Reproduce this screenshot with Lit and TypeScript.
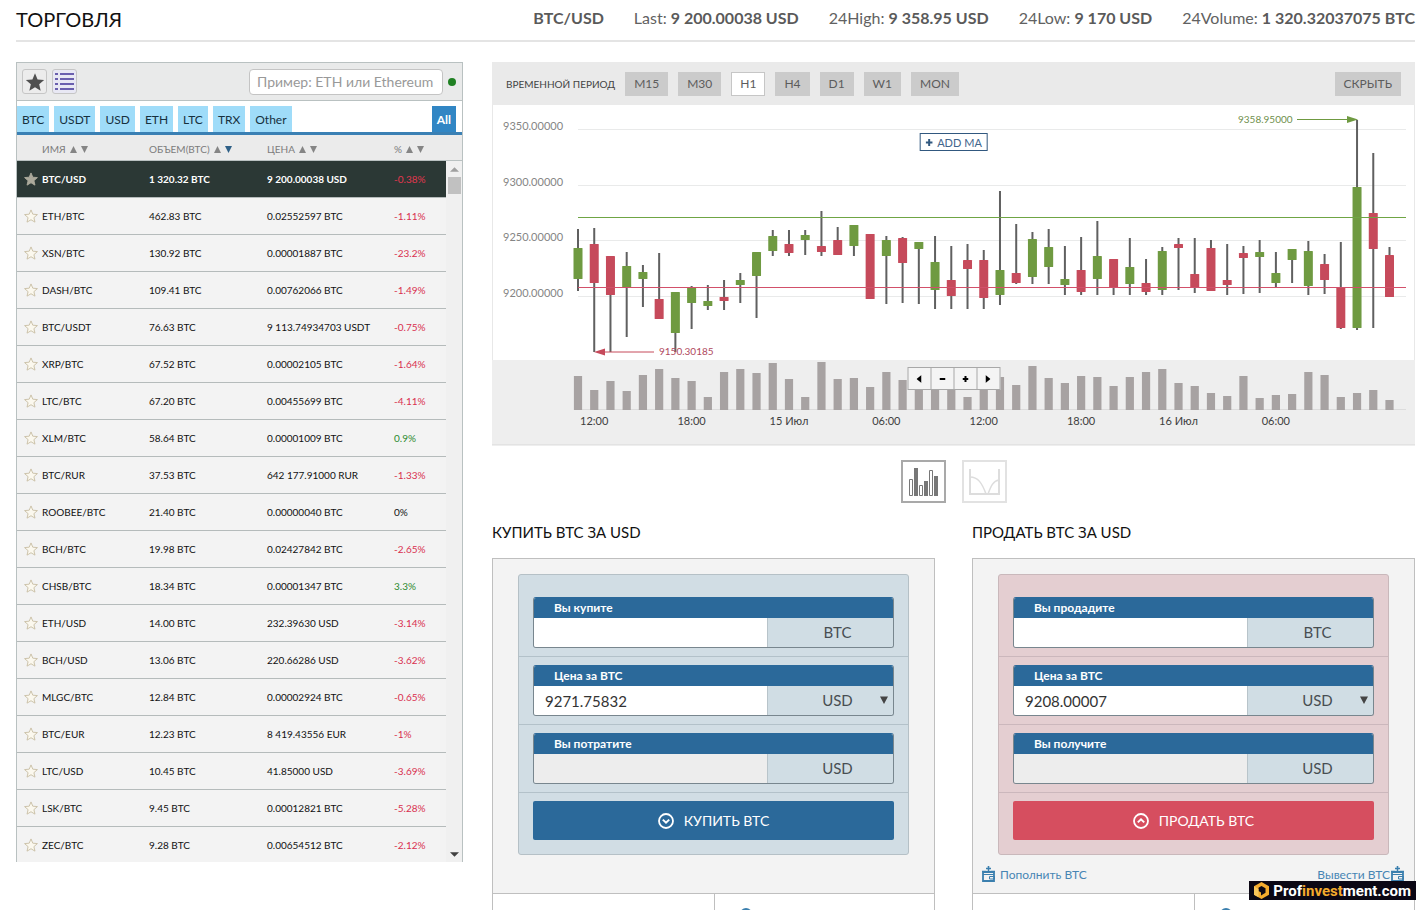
import { LitElement, html, svg, css, nothing } from "lit";
import { customElement, property, state } from "lit/decorators.js";
import { classMap } from "lit/directives/class-map.js";

/** Market rows: pair, volume, price, daily change. */
const MARKETS: [string, string, string, string][] = [
  ["BTC/USD", "1 320.32 BTC", "9 200.00038 USD", "-0.38%"],
  ["ETH/BTC", "462.83 BTC", "0.02552597 BTC", "-1.11%"],
  ["XSN/BTC", "130.92 BTC", "0.00001887 BTC", "-23.2%"],
  ["DASH/BTC", "109.41 BTC", "0.00762066 BTC", "-1.49%"],
  ["BTC/USDT", "76.63 BTC", "9 113.74934703 USDT", "-0.75%"],
  ["XRP/BTC", "67.52 BTC", "0.00002105 BTC", "-1.64%"],
  ["LTC/BTC", "67.20 BTC", "0.00455699 BTC", "-4.11%"],
  ["XLM/BTC", "58.64 BTC", "0.00001009 BTC", "0.9%"],
  ["BTC/RUR", "37.53 BTC", "642 177.91000 RUR", "-1.33%"],
  ["ROOBEE/BTC", "21.40 BTC", "0.00000040 BTC", "0%"],
  ["BCH/BTC", "19.98 BTC", "0.02427842 BTC", "-2.65%"],
  ["CHSB/BTC", "18.34 BTC", "0.00001347 BTC", "3.3%"],
  ["ETH/USD", "14.00 BTC", "232.39630 USD", "-3.14%"],
  ["BCH/USD", "13.06 BTC", "220.66286 USD", "-3.62%"],
  ["MLGC/BTC", "12.84 BTC", "0.00002924 BTC", "-0.65%"],
  ["BTC/EUR", "12.23 BTC", "8 419.43556 EUR", "-1%"],
  ["LTC/USD", "10.45 BTC", "41.85000 USD", "-3.69%"],
  ["LSK/BTC", "9.45 BTC", "0.00012821 BTC", "-5.28%"],
  ["ZEC/BTC", "9.28 BTC", "0.00654512 BTC", "-2.12%"],
];

/** Candles: wick top, wick bottom, body top, body bottom, rising (1) or falling (0), volume top. */
const CANDLES: number[][] = [
  [229, 291, 248, 279, 1, 376], [228, 352, 244, 283, 0, 390], [256, 352, 256, 295, 0, 381],
  [252, 337, 266, 288, 1, 391], [265, 307, 272, 279, 1, 375], [253, 319, 299, 319, 0, 369],
  [292, 352, 292, 333, 1, 378], [286, 329, 287, 303, 1, 381], [285, 310, 301, 306, 1, 397],
  [280, 310, 297, 301, 0, 372], [273, 303, 280, 285, 1, 369], [252, 318, 252, 276, 1, 373],
  [230, 256, 236, 251, 1, 363], [230, 256, 244, 253, 0, 379], [230, 255, 235, 240, 1, 397],
  [211, 256, 246, 252, 0, 362], [227, 255, 240, 255, 0, 379], [225, 256, 225, 246, 1, 378],
  [234, 299, 234, 299, 0, 387], [236, 304, 240, 256, 1, 372], [237, 303, 238, 263, 0, 380],
  [242, 304, 242, 249, 1, 387], [236, 309, 262, 290, 1, 378], [246, 309, 280, 296, 0, 385],
  [244, 309, 260, 269, 0, 397], [250, 309, 260, 298, 0, 380], [191, 305, 270, 295, 1, 377],
  [224, 284, 273, 283, 0, 385], [232, 284, 239, 277, 1, 366], [229, 284, 247, 267, 1, 378],
  [246, 295, 279, 285, 1, 383], [237, 295, 270, 292, 0, 376], [221, 295, 256, 279, 1, 377],
  [259, 295, 259, 288, 0, 386], [238, 295, 267, 284, 1, 377], [259, 295, 283, 292, 0, 372],
  [247, 295, 251, 290, 1, 369], [238, 290, 244, 248, 0, 383], [238, 293, 274, 288, 0, 386],
  [240, 291, 248, 291, 0, 393], [244, 295, 280, 285, 0, 396], [246, 294, 253, 258, 0, 376],
  [240, 293, 252, 257, 1, 398], [252, 288, 273, 283, 1, 395], [249, 283, 249, 260, 1, 394],
  [241, 295, 251, 286, 1, 372], [254, 294, 264, 280, 0, 375], [242, 329, 287, 328, 0, 397],
  [120, 330, 187, 328, 1, 393], [153, 328, 213, 249, 0, 390], [247, 297, 255, 297, 0, 400],
];

const GRID: [number, string][] = [
  [130, "9350.00000"], [186, "9300.00000"], [241, "9250.00000"], [297, "9200.00000"],
];
const TIMES = ["12:00", "18:00", "15 Июл", "06:00", "12:00", "18:00", "16 Июл", "06:00"];
const STAR = "M12 1.6l3.1 7.3 7.9.7-6 5.2 1.8 7.7L12 18.4l-6.8 4.1L7 14.8 1 9.6l7.900-.7z";
const candleX = (i: number) => 578 + i * 16.23;

@customElement("market-list")
export class MarketList extends LitElement {
  @state() private selected = "BTC/USD";

  static styles = css`
    :host { display: block; border: 1px solid #b9c1c1; border-bottom: 0; background: #ebebeb; }
    button, input { font: inherit; }
    .tools { display: flex; align-items: center; gap: 5px; height: 37px; padding: 0 6px 0 5px; background: #e9eaea; border-bottom: 1px solid #b9c1c1; }
    .tool { display: grid; place-items: center; width: 25px; height: 25px; padding: 0; border: 1px solid #c6c6c6; border-radius: 3px; background: #ececec; }
    .tool.list { background: #e8e8f4; }
    .search { box-sizing: border-box; width: 194px; height: 26px; margin-left: auto; padding: 0 7px; border: 1px solid #c4c4c4; border-radius: 4px; background: #fff; font-size: 14px; }
    .search::placeholder { color: #999; opacity: 1; }
    .dot { width: 8px; height: 8px; border-radius: 50%; background: #1f8023; }
    .tabs { display: flex; gap: 5px; padding: 5px 6px 0 0; background: #fff; border-bottom: 3px solid #3a80b4; }
    .tab { height: 26px; padding: 0 5px; border: 0; background: #9fdcf9; color: #16303e; font-size: 12px; }
    .tab.all { margin-left: auto; background: #3186c4; color: #fff; font-weight: 700; }
    .body { display: grid; grid-template-columns: 1fr 16px; height: 727px; overflow: hidden; }
    table { width: 100%; align-self: start; border-collapse: separate; border-spacing: 0; table-layout: fixed; font-size: 10px; color: #111; }
    .c-star { width: 25px; }
    .c-name { width: 107px; }
    .c-vol { width: 118px; }
    .c-price { width: 127px; }
    th { box-sizing: border-box; height: 26px; padding: 2px 0 0; border-bottom: 1px solid #b9c1c1; font-size: 10px; font-weight: 400; color: #7c7c7c; text-align: left; white-space: nowrap; }
    .sort { width: 7px; height: 7px; margin-left: 4px; fill: #858585; }
    .sort.on { fill: #2f6087; }
    td { box-sizing: border-box; height: 37px; padding: 0 0 1px; border-bottom: 1px solid #b5bbbb; background: #f3f3f3; white-space: nowrap; }
    .fav { display: block; width: 14px; height: 14px; margin-left: 7px; fill: #fbf8ee; stroke: #c9bfa6; stroke-width: 1.6; }
    .down { color: #d9304f; }
    .up { color: #2b8a2e; }
    .sel td { background: #2b3835; color: #fff; font-weight: 700; }
    .sel td.down { color: #e2374f; font-weight: 400; }
    .sel .fav { fill: #aba99b; stroke: #aba99b; }
    .side { display: grid; grid-template-rows: 26px 1fr; }
    .cap { box-sizing: border-box; border-bottom: 1px solid #b9c1c1; }
    .bar { display: flex; flex-direction: column; align-items: center; background: #f0f0f0; }
    .arrow { width: 9px; height: 5px; margin: 6px 0 5px; fill: #a0a0a0; }
    .thumb { width: 13px; height: 17px; background: #c1c1c1; }
    .arrow.low { margin: auto 0 7px; fill: #404040; }
  `;

  private sorter(down = false) {
    return html`<svg class="sort" viewBox="0 0 8 8" preserveAspectRatio="none"><path d="M0 8h8L4 0z" /></svg><svg
        class=${classMap({ sort: true, on: down })} viewBox="0 0 8 8" preserveAspectRatio="none"><path d="M0 0h8L4 8z" /></svg>`;
  }

  render() {
    return html`
      <div class="tools">
        <button class="tool" aria-label="Избранное">
          <svg width="20" height="20" viewBox="0 0 24 24" fill="#505050"><path d=${STAR} /></svg>
        </button>
        <button class="tool list" aria-label="Список">
          <svg width="19" height="17" viewBox="0 0 19 17" fill="#6a5fae">
            ${[0, 5, 10, 15].map((y) => svg`<rect x="0" y=${y} width="3" height="2" /><rect x="5" y=${y} width="14" height="2" />`)}
          </svg>
        </button>
        <input class="search" aria-label="Поиск" placeholder="Пример: ETH или Ethereum" />
        <span class="dot"></span>
      </div>
      <div class="tabs">
        ${["BTC", "USDT", "USD", "ETH", "LTC", "TRX", "Other"].map((t) => html`<button class="tab">${t}</button>`)}
        <button class="tab all">All</button>
      </div>
      <div class="body">
        <table>
          <colgroup><col class="c-star" /><col class="c-name" /><col class="c-vol" /><col class="c-price" /><col /></colgroup>
          <thead>
            <tr><th></th><th>ИМЯ${this.sorter()}</th><th>ОБЪЕМ(BTC)${this.sorter(true)}</th><th>ЦЕНА${this.sorter()}</th><th>%${this.sorter()}</th></tr>
          </thead>
          <tbody>
            ${MARKETS.map(([pair, vol, price, pct]) => html`
              <tr class=${classMap({ sel: pair === this.selected })} @click=${() => (this.selected = pair)}>
                <td><svg class="fav" viewBox="0 0 24 24"><path d=${STAR} /></svg></td>
                <td>${pair}</td><td>${vol}</td><td>${price}</td>
                <td class=${classMap({ down: pct.startsWith("-"), up: !pct.startsWith("-") && pct !== "0%" })}>${pct}</td>
              </tr>`)}
          </tbody>
        </table>
        <div class="side">
          <div class="cap"></div>
          <div class="bar">
            <svg class="arrow" viewBox="0 0 10 5"><path d="M0 5h10L5 0z" /></svg>
            <div class="thumb"></div>
            <svg class="arrow low" viewBox="0 0 10 5"><path d="M0 0h10L5 5z" /></svg>
          </div>
        </div>
      </div>`;
  }
}

@customElement("price-chart")
export class PriceChart extends LitElement {
  @state() private period = "H1";

  static styles = css`
    :host { display: block; position: relative; }
    button { font: inherit; }
    .head { display: flex; align-items: center; gap: 10px; height: 43px; padding: 0 14px; background: #eaeaea; color: #444; }
    .label { font-size: 10px; white-space: nowrap; }
    .per { height: 24px; padding: 0 8px; border: 1px solid #cbcbcb; background: #cbcbcb; color: #5c5c5c; font-size: 12px; white-space: nowrap; }
    .per.on { background: #fff; border-color: #c6c6c6; }
    .hide { margin-left: auto; }
    .plot { display: block; width: 100%; height: auto; }
    .tick { font-size: 11px; fill: #858585; }
    .time { font-size: 11px; fill: #404040; text-anchor: middle; }
    .note { font-size: 10px; }
    .add { position: absolute; top: 71px; left: 50%; transform: translateX(-50%); display: flex; align-items: center; gap: 5px; height: 18px; padding: 0 5px; border: 1px solid #31587f; background: #fff; color: #41658c; font-size: 11px; white-space: nowrap; }
    .nav { position: absolute; top: 305px; left: 50%; transform: translateX(-50%); display: flex; border: 1px solid #a8a8a8; background: #f4f4f4; }
    .nav button { display: grid; place-items: center; width: 23px; height: 21px; padding: 0; border: 0; border-left: 1px solid #a8a8a8; background: none; }
    .nav button:first-child { width: 22px; border-left: 0; }
  `;

  render() {
    return html`
      <div class="head">
        <span class="label">ВРЕМЕННОЙ ПЕРИОД</span>
        ${["M15", "M30", "H1", "H4", "D1", "W1", "MON"].map((p) => html`
          <button class=${classMap({ per: true, on: p === this.period })} @click=${() => (this.period = p)}>${p}</button>`)}
        <button class="per hide">СКРЫТЬ</button>
      </div>
      <svg class="plot" viewBox="492 105 923 341">
        <rect x="492" y="105" width="923" height="255" fill="#e8e8e8" />
        <rect x="493" y="105" width="921" height="255" fill="#fff" />
        <rect x="492" y="360" width="923" height="86" fill="#eeeeee" />
        <rect x="492" y="444" width="923" height="1" fill="#e3e3e3" />
        ${GRID.map(([y, t]) => svg`<rect x="578" y=${y - 1} width="828" height="1" fill="#e9eaea" /><text class="tick" x="503" y=${y}>${t}</text>`)}
        <rect x="578" y="409" width="828" height="1" fill="#dcdcdc" />
        ${CANDLES.map(([top, bottom], i) => svg`<rect x=${candleX(i) - 1} y=${top} width="2" height=${bottom - top} fill="#606060" />`)}
        ${CANDLES.map(([, , open, close, up], i) => svg`<rect x=${candleX(i) - 4.5} y=${open} width="9" height=${close - open} rx="0.6" fill=${up ? "#6f9a41" : "#c64a5b"} />`)}
        ${CANDLES.map((c, i) => svg`<rect x=${candleX(i) - 4.1} y=${c[5]} width="8.200" height=${410 - c[5]} fill="#a7a2a2" />`)}
        <path d="M578 217.500h828" stroke="#6fa544" />
        <path d="M578 287.500h828" stroke="#d2506a" />
        ${TIMES.map((t, i) => svg`<text class="time" x=${candleX(1 + i * 6)} y="425">${t}</text>`)}
        <path d="M1297 119.500h52" stroke="#6f9a41" />
        <path d="M1347 116l11 3.500-11 3.500z" fill="#6f9a41" />
        <text class="note" x="1238" y="123" fill="#6f8f4c">9358.95000</text>
        <path d="M602 352h52" stroke="#c64a5b" />
        <path d="M605 348.500l-11 3.500 11 3.500z" fill="#c64a5b" />
        <text class="note" x="659" y="355" fill="#b04a5e">9150.30185</text>
      </svg>
      <button class="add"><svg width="7" height="7" viewBox="0 0 7 7"><path d="M3.500 0v7M0 3.500h7" stroke="#31587f" stroke-width="2" /></svg>ADD MA</button>
      <div class="nav">
        <button aria-label="Назад"><svg width="5" height="8" viewBox="0 0 5 8"><path d="M5 0v8L0 4z" /></svg></button>
        <button aria-label="Уменьшить"><svg width="6" height="2" viewBox="0 0 6 2"><path d="M0 0h6v2H0z" /></svg></button>
        <button aria-label="Увеличить"><svg width="6" height="6" viewBox="0 0 6 6"><path d="M3 0v6M0 3h6" stroke="#000" stroke-width="2" /></svg></button>
        <button aria-label="Вперёд"><svg width="5" height="8" viewBox="0 0 5 8"><path d="M0 0v8l5-4z" /></svg></button>
      </div>`;
  }
}

const wallet = html`<svg width="13" height="16" viewBox="0 0 13 16" fill="none" stroke="#3b7fae">
  <path d="M6.500 0v5M4 2.500h5" stroke-width="1.600" />
  <path d="M1 6h11v9H1z" stroke-width="1.800" /><path d="M1 8.500h11" /><path d="M7.500 10.500h5v2.500h-5z" />
  <path d="M0 5.500h4.500M8.500 5.500H13" stroke-width="1.500" />
</svg>`;

@customElement("order-form")
export class OrderForm extends LitElement {
  @property() heading = "";
  @property() action = "";
  @property() price = "";
  @property({ attribute: false }) labels: string[] = [];
  @property({ type: Boolean, reflect: true }) sell = false;

  static styles = css`
    :host { display: block; }
    button, input, select { font: inherit; }
    h2 { margin: 0 0 14px; font-size: 15px; line-height: 24px; font-weight: 400; color: #111; }
    .panel { border: 1px solid #bfbfbf; background: #f3f3f3; }
    .box { margin: 15px 25px 0; padding: 22px 14px 14px; border: 1px solid #b5c0c6; border-radius: 3px; background: #d1dde4; }
    .row { margin: 0 -14px 8px; padding: 0 14px 8px; border-bottom: 1px solid #b3c1c9; }
    .field { border: 1px solid #78868e; border-top-color: #2b699a; border-radius: 3px; overflow: hidden; }
    label { display: block; height: 20px; padding-left: 20px; background: #2b699a; color: #fff; font-size: 12px; line-height: 20px; font-weight: 700; }
    .value { display: grid; grid-template-columns: 1fr 125px; height: 29px; }
    input { min-width: 0; padding: 0 11px; border: 0; border-right: 1px solid #b8c4ca; background: #fff; color: #333; font-size: 15px; }
    input:read-only { background: #ededed; }
    .unit { position: relative; display: grid; background: #d0dde4; color: #484e52; font-size: 15px; line-height: 28px; text-align: center; padding-left: 14px; }
    select { height: 28px; padding: 0; border: 0; appearance: none; background: none; color: inherit; text-align-last: center; }
    .caret { position: absolute; right: 5px; top: 10px; width: 8px; height: 8px; fill: #444; pointer-events: none; }
    .submit { display: flex; align-items: center; justify-content: center; gap: 10px; width: 100%; height: 39px; border: 0; border-radius: 2px; background: #2b699a; color: #fff; font-size: 14px; }
    :host([sell]) .box { background: #e4ced1; border-color: #c9b8bb; }
    :host([sell]) .row { border-color: #cbb7bc; }
    :host([sell]) .submit { background: #d64e5f; }
    .links { display: flex; justify-content: space-between; align-items: center; height: 38px; padding: 0 10px 0 9px; font-size: 12px; }
    a { display: flex; align-items: center; gap: 5px; color: #4785b3; text-decoration: none; }
    a.out { gap: 1px; }
    .foot { display: grid; grid-template-columns: 1fr 1fr; height: 60px; border-top: 1px solid #bfbfbf; background: #fff; }
    .foot div + div { padding: 13px 25px; border-left: 1px solid #bfbfbf; }
    .foot svg { display: block; }
  `;

  private field(i: number) {
    const id = `f${i}`;
    return html`<div class="row"><div class="field">
      <label for=${id}>${this.labels[i]}</label>
      <div class="value">
        <input id=${id} .value=${i === 1 ? this.price : ""} ?readonly=${i === 2} />
        ${i === 1
          ? html`<div class="unit"><select aria-label="Валюта"><option>USD</option></select><svg class="caret" viewBox="0 0 8 8"><path d="M0 0.500h8L4 8z" /></svg></div>`
          : html`<div class="unit">${i ? "USD" : "BTC"}</div>`}
      </div>
    </div></div>`;
  }

  render() {
    return html`
      <h2>${this.heading}</h2>
      <div class="panel">
        <div class="box">
          ${[0, 1, 2].map((i) => this.field(i))}
          <button class="submit">
            <svg width="16" height="16" viewBox="0 0 16 16" fill="none" stroke="#fff" stroke-width="2">
              <circle cx="8" cy="8" r="7" stroke-width="1.800" /><path d=${this.sell ? "M4.800 9.400L8 6.300l3.200 3.100" : "M4.800 6.600L8 9.700l3.200-3.100"} />
            </svg>${this.action}
          </button>
        </div>
        <div class="links">
          ${this.sell ? html`<a href="#deposit">${wallet}Пополнить BTC</a><a class="out" href="#withdraw">Вывести BTC${wallet}</a>` : nothing}
        </div>
        <div class="foot"><div></div><div><svg width="12" height="12" viewBox="0 0 12 12"><circle cx="6" cy="7" r="5" fill="none" stroke="#3b7fae" stroke-width="2" /></svg></div></div>
      </div>`;
  }
}

@customElement("app-root")
export class AppRoot extends LitElement {
  static styles = css`
    :host { display: block; position: relative; box-sizing: border-box; height: 100vh; overflow: hidden; padding: 0 11px 0 16px; background: #fff; font-family: Lato, "Open Sans", sans-serif; color: #222; }
    button { font: inherit; }
    header { display: flex; justify-content: space-between; align-items: center; box-sizing: border-box; height: 42px; padding-bottom: 2px; border-bottom: 2px solid #e4e4e4; }
    h1 { margin: 0; font-size: 20px; line-height: 38px; font-weight: 400; color: #111; }
    .stats { display: flex; gap: 30px; font-size: 16px; line-height: 36px; color: #616161; white-space: nowrap; }
    .stats span { padding-bottom: 2px; }
    b { font-weight: 700; color: #5a5a5a; }
    main { display: grid; grid-template-columns: 447px 1fr; gap: 29px; align-items: start; margin-top: 20px; }
    .modes { display: flex; justify-content: center; gap: 16px; margin: 14px 0 17px; }
    .mode { box-sizing: border-box; display: grid; place-items: center; width: 45px; height: 43px; padding: 0; border: 2px solid #a9a9a9; background: #fff; }
    .mode.off { border-color: #e2e2e2; }
    .forms { display: grid; grid-template-columns: 1fr 1fr; gap: 37px; }
    .mark { position: absolute; right: 10px; bottom: 10px; display: flex; align-items: center; gap: 3px; height: 19px; padding: 0 5px 0 4px; background: #0b0714; color: #fff; font-family: Roboto, sans-serif; font-size: 15px; font-weight: 700; font-variant-ligatures: none; white-space: nowrap; }
    .mark i { font-style: normal; color: #f4ab2d; }
  `;

  render() {
    return html`
      <header>
        <h1>ТОРГОВЛЯ</h1>
        <div class="stats">
          <span><b>BTC/USD</b></span><span>Last: <b>9 200.00038 USD</b></span><span>24High: <b>9 358.95 USD</b></span
          ><span>24Low: <b>9 170 USD</b></span><span>24Volume: <b>1 320.32037075 BTC</b></span>
        </div>
      </header>
      <main>
        <market-list></market-list>
        <section>
          <price-chart></price-chart>
          <div class="modes">
            <button class="mode" aria-label="Свечи">
              <svg width="31" height="30" viewBox="0 0 31 30" fill="none" stroke="#777">
                <path d="M1.500 12.500h3v16h-3zM11.500 18.500h3v10h-3zM21.500 3.500h3v25h-3z" />
                <path d="M6 1h4v28H6zM16 14h4v15h-4zM26 9h4v20h-4z" fill="#777" stroke="none" />
              </svg>
            </button>
            <button class="mode off" aria-label="Глубина">
              <svg width="31" height="30" viewBox="0 0 31 30" fill="none" stroke="#ddd">
                <path d="M1 2v25h29V2" stroke-width="2" /><path d="M1 10c8 0 12 6 16 17M30 13c-6 1-8 6-11 14" stroke-width="1.500" />
              </svg>
            </button>
          </div>
          <div class="forms">
            <order-form heading="КУПИТЬ BTC ЗА USD" action="КУПИТЬ BTC" price="9271.75832" .labels=${["Вы купите", "Цена за BTC", "Вы потратите"]}></order-form>
            <order-form sell heading="ПРОДАТЬ BTC ЗА USD" action="ПРОДАТЬ BTC" price="9208.00007" .labels=${["Вы продадите", "Цена за BTC", "Вы получите"]}></order-form>
          </div>
        </section>
      </main>
      <div class="mark">
        <svg width="17" height="17" viewBox="0 0 17 17"><path d="M8.500 0L16 4.200v8.600L8.500 17 1 12.800V4.200z" fill="#f4ab2d" /><path d="M8.500 4l4 2.300v4.500L8 13.400v-3L5.500 9V5.800z" fill="#0b0714" /><path d="M1 4.200L5.500 7v8.300L1 12.800z" fill="#f8c65a" /></svg>
        <span>Prof<i>invest</i>ment.com</span>
      </div>`;
  }
}
